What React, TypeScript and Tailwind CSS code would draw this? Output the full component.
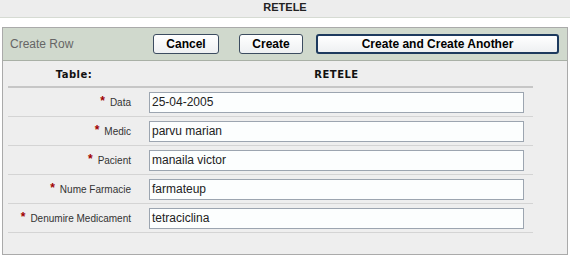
const rows = [
  { label: "Data", value: "25-04-2005" },
  { label: "Medic", value: "parvu marian" },
  { label: "Pacient", value: "manaila victor" },
  { label: "Nume Farmacie", value: "farmateup" },
  { label: "Denumire Medicament", value: "tetraciclina" },
]

function Btn({ children, w, primary }: { children: string; w: string; primary?: boolean }) {
  return (
    <button
      className={
        primary
          ? `${w} h-[20px] rounded-[3px] border-2 border-[#1d3a5e] bg-gradient-to-b from-white to-[#eef0f2] text-[12px] font-bold text-black leading-none`
          : `${w} h-[20px] rounded-[3px] border border-[#3c4c60] bg-gradient-to-b from-white to-[#eef0f2] text-[12px] font-bold text-black leading-none`
      }
    >
      {children}
    </button>
  )
}

export default function App() {
  return (
    <div className="w-[570px] h-[256px] bg-white overflow-hidden font-['Liberation_Sans',Arial,sans-serif]">
      <div className="h-[18px] bg-[#ededed] border-b border-[#d6dbd3] text-center text-[11px] font-bold text-[#222] leading-[15px]">
        RETELE
      </div>
      <div className="h-[9px]" />
      <div className="ml-[2px] w-[566px] border border-[#aaaaaa]">
        <div className="h-[33px] bg-[#d0d9cd] border-b border-[#a9b0a6] flex items-start pt-[6px] pl-[7px]">
          <div className="w-[143px] pt-[3px] text-[12px] text-[#666] leading-[14px]">Create Row</div>
          <Btn w="w-[66px]">Cancel</Btn>
          <div className="w-[20px]" />
          <Btn w="w-[64px]">Create</Btn>
          <div className="w-[13px]" />
          <Btn w="w-[243px]" primary>
            Create and Create Another
          </Btn>
        </div>
        <div className="h-[193px] bg-[#eeeeee] pl-[5px]">
          <div className="w-[525px]">
            <div className="h-[27px] flex items-center border-b-2 border-[#c6c6c6] font-['DejaVu_Sans',Verdana,sans-serif] text-[10px] font-bold text-[#111] tracking-[0.5px]">
              <div className="w-[132px] text-center pt-[2px]">Table:</div>
              <div className="flex-1 text-center pt-[2px]">RETELE</div>
            </div>
            {rows.map((r) => (
              <div key={r.label} className="h-[29px] flex items-center border-b border-[#d4d4d4]">
                <div className="w-[132px] pr-[9px] text-right text-[10px] text-[#333]">
                  <span className="text-[#a00000] font-bold text-[12px] relative top-[-1px] mr-[5px]">*</span>
                  {r.label}
                </div>
                <div className="flex-1 pl-[9px]">
                  <div className="w-[375px] h-[21px] border border-[#9ca5b0] bg-[#fcfefe] pl-[2px] text-[12px] text-[#222] leading-[19px]">
                    {r.value}
                  </div>
                </div>
              </div>
            ))}
          </div>
        </div>
      </div>
    </div>
  )
}
